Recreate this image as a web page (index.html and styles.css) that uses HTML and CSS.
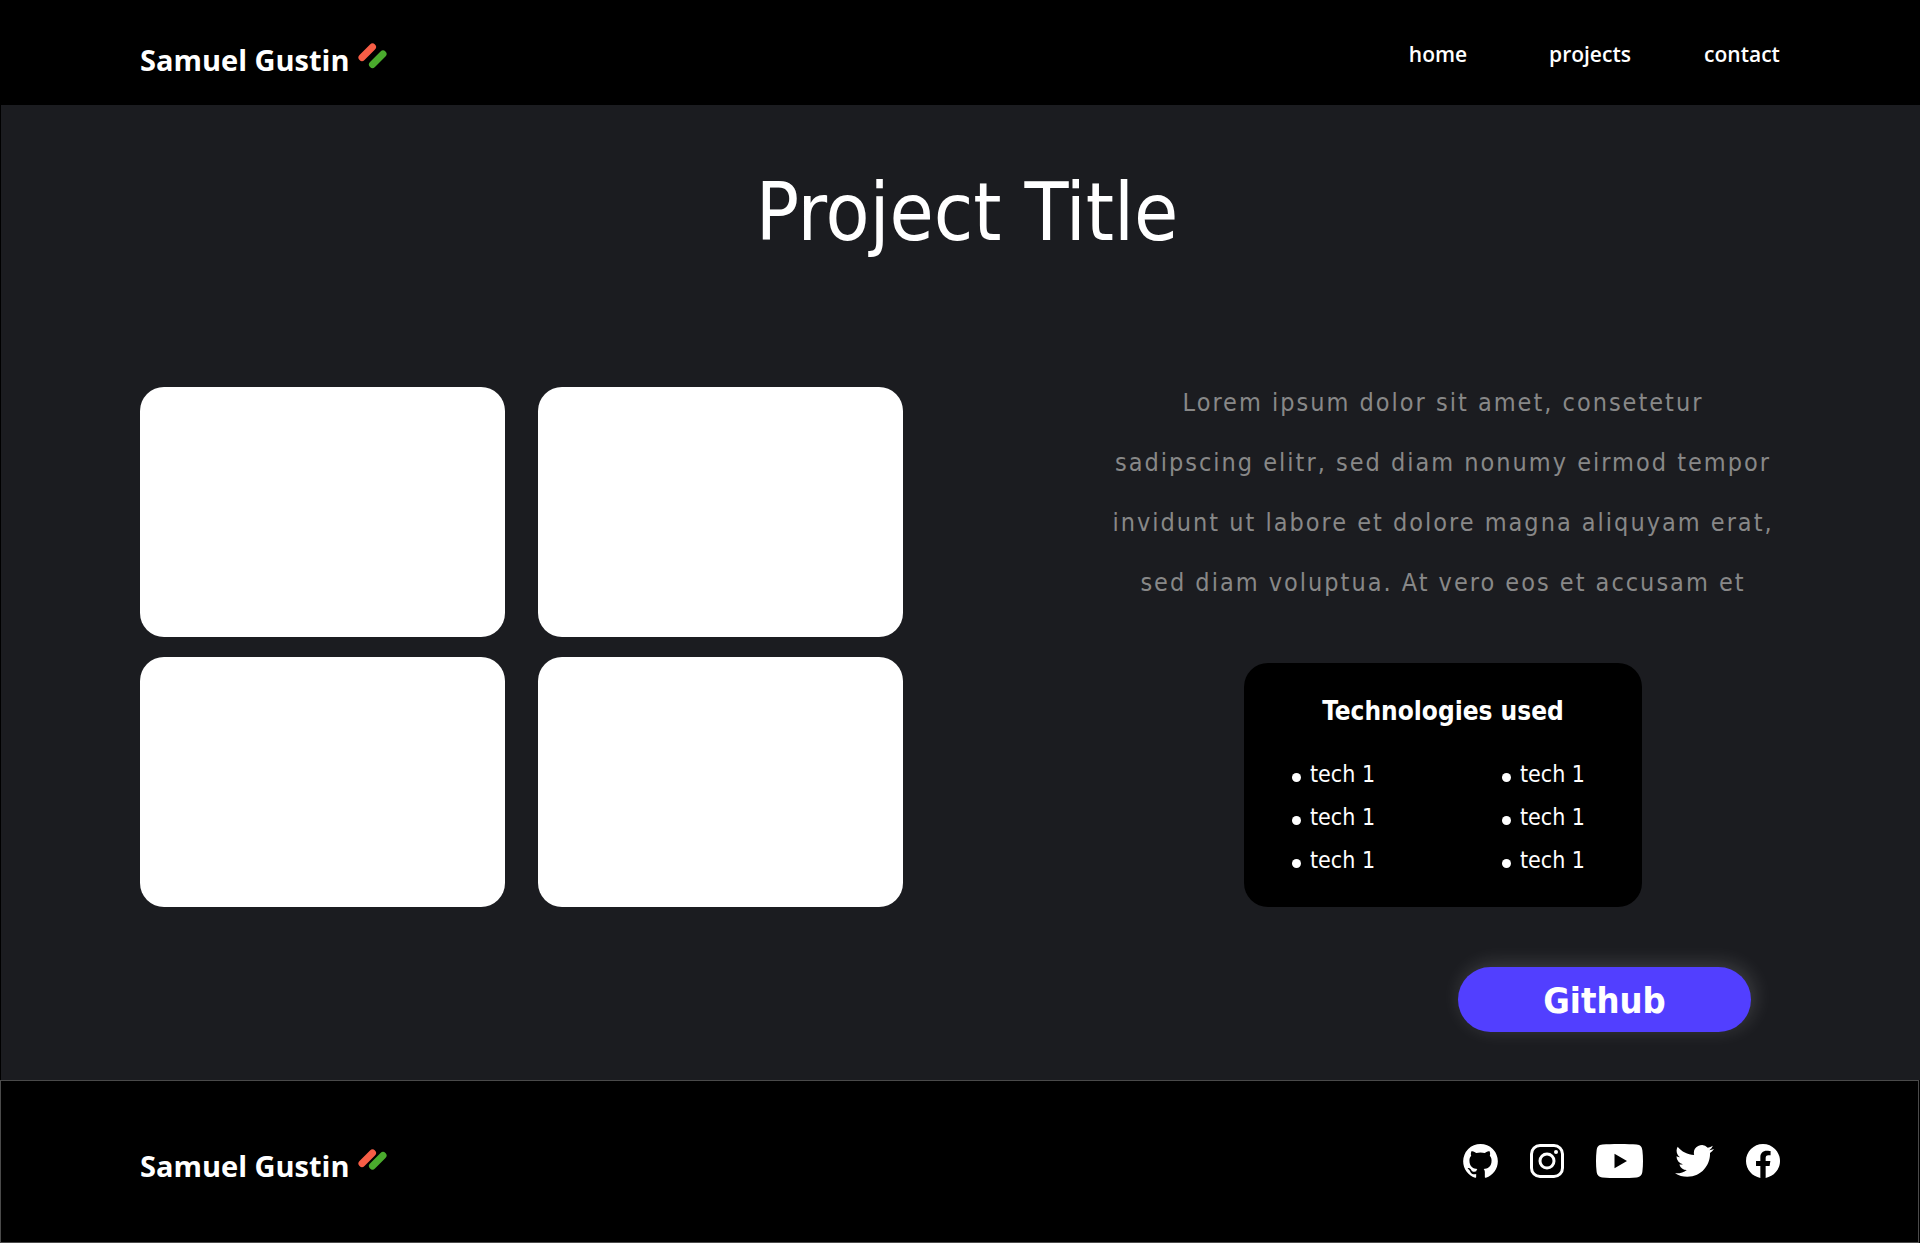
FILE: index.html
```html
<!DOCTYPE html>
<html lang="en">
<head>
<meta charset="utf-8">
<meta name="viewport" content="width=device-width, initial-scale=1">
<title>Samuel Gustin - Project</title>
<link rel="stylesheet" href="styles.css">
</head>
<body>
<header class="site-header">
  <a class="logo" href="#">Samuel Gustin
    <svg class="logo-mark" viewBox="0 0 29 26" width="29" height="26" aria-hidden="true"><path d="M4 14.5 14.5 4" stroke="#f75e46"/><path d="M14.5 21.5 25 11" stroke="#4aab2d"/></svg>
  </a>
  <nav class="site-nav">
    <a href="#">home</a>
    <a href="#">projects</a>
    <a href="#">contact</a>
  </nav>
</header>

<main class="project">
  <h1 class="project-title">Project Title</h1>
  <div class="project-body">
    <div class="gallery">
      <div class="shot"></div>
      <div class="shot"></div>
      <div class="shot"></div>
      <div class="shot"></div>
    </div>
    <div class="details">
      <p class="description">Lorem ipsum dolor sit amet, consetetur<br>sadipscing elitr, sed diam nonumy eirmod tempor<br>invidunt ut labore et dolore magna aliquyam erat,<br>sed diam voluptua. At vero eos et accusam et</p>
      <section class="tech">
        <h2 class="tech-title">Technologies used</h2>
        <div class="tech-lists">
          <ul class="tech-list"><li>tech 1</li><li>tech 1</li><li>tech 1</li></ul>
          <ul class="tech-list"><li>tech 1</li><li>tech 1</li><li>tech 1</li></ul>
        </div>
      </section>
      <button class="github-button" type="button">Github</button>
    </div>
  </div>
</main>

<footer class="site-footer">
  <a class="logo" href="#">Samuel Gustin
    <svg class="logo-mark" viewBox="0 0 29 26" width="29" height="26" aria-hidden="true"><path d="M4 14.5 14.5 4" stroke="#f75e46"/><path d="M14.5 17 25 6.500" stroke="#4aab2d"/></svg>
  </a>
  <div class="social">
    <a href="#" aria-label="GitHub"><svg viewBox="2 2 20 19.600" width="35" height="34"><path d="M12,2A10,10 0 0,0 2,12C2,16.42 4.87,20.17 8.84,21.5C9.34,21.58 9.5,21.27 9.5,21C9.5,20.77 9.5,20.14 9.5,19.31C6.73,19.91 6.14,17.97 6.14,17.97C5.68,16.81 5.03,16.5 5.03,16.5C4.12,15.88 5.1,15.9 5.1,15.9C6.1,15.97 6.63,16.93 6.63,16.93C7.5,18.45 8.97,18 9.54,17.76C9.63,17.11 9.89,16.67 10.17,16.42C7.95,16.17 5.62,15.31 5.62,11.5C5.62,10.39 6,9.5 6.65,8.79C6.55,8.54 6.2,7.5 6.75,6.15C6.75,6.15 7.59,5.88 9.5,7.17C10.29,6.95 11.15,6.84 12,6.84C12.85,6.84 13.71,6.95 14.5,7.17C16.41,5.88 17.25,6.15 17.25,6.15C17.8,7.5 17.45,8.54 17.35,8.79C18,9.5 18.38,10.39 18.38,11.5C18.38,15.32 16.04,16.16 13.81,16.41C14.17,16.72 14.5,17.33 14.5,18.26C14.5,19.6 14.5,20.68 14.5,21C14.5,21.27 14.66,21.59 15.17,21.5C19.14,20.16 22,16.42 22,12A10,10 0 0,0 12,2Z"/></svg></a>
    <a href="#" aria-label="Instagram"><svg viewBox="0 0 34 34" width="34" height="34"><rect x="1.500" y="1.500" width="31" height="31" rx="8.500" fill="none" stroke="#fff" stroke-width="3"/><circle cx="17" cy="17" r="7" fill="none" stroke="#fff" stroke-width="3"/><circle cx="26" cy="8" r="2"/></svg></a>
    <a href="#" aria-label="YouTube"><svg viewBox="0 0 47 34" width="47" height="34"><path fill-rule="evenodd" d="M23.500 0C31 0 36 .2 40.500.6C44.500 1 46 3 46.400 6.500C47.200 13 47.200 21 46.400 27.500C46 31 44.500 33 40.500 33.400C36 33.800 31 34 23.500 34S11 33.800 6.500 33.400C2.500 33 1 31 .6 27.500C-.2 21-.2 13 .6 6.500C1 3 2.500 1 6.500.6C11 .2 16 0 23.500 0ZM18.500 9.800V24.200L31 17Z"/></svg></a>
    <a href="#" aria-label="Twitter"><svg viewBox="0 1.700 24 20.600" width="39" height="34"><path d="M23.953 4.570a10 10 0 01-2.825.775 4.958 4.958 0 002.163-2.723c-.951.555-2.005.959-3.127 1.184a4.920 4.920 0 00-8.384 4.482C7.690 8.095 4.067 6.130 1.640 3.162a4.822 4.822 0 00-.666 2.475c0 1.710.870 3.213 2.188 4.096a4.904 4.904 0 01-2.228-.616v.060a4.923 4.923 0 003.946 4.827 4.996 4.996 0 01-2.212.085 4.936 4.936 0 004.604 3.417 9.867 9.867 0 01-6.102 2.105c-.390 0-.779-.023-1.170-.067a13.995 13.995 0 007.557 2.209c9.053 0 13.998-7.496 13.998-13.985 0-.210 0-.420-.015-.630A9.935 9.935 0 0024 4.590z"/></svg></a>
    <a href="#" aria-label="Facebook"><svg viewBox="0 0 24 24" width="34" height="34"><path d="M24 12.073c0-6.627-5.373-12-12-12s-12 5.373-12 12c0 5.990 4.388 10.954 10.125 11.854v-8.385H7.078v-3.470h3.047V9.430c0-3.007 1.792-4.669 4.533-4.669 1.312 0 2.686.235 2.686.235v2.953H15.830c-1.491 0-1.956.925-1.956 1.874v2.250h3.328l-.532 3.470h-2.796v8.385C19.612 23.027 24 18.062 24 12.073z"/></svg></a>
  </div>
</footer>
</body>
</html>
```
FILE: styles.css
```css
* {
  box-sizing: border-box;
}

body {
  margin: 0;
  background: #000;
  color: #fff;
  font-family: "DejaVu Sans Condensed", "Noto Sans", sans-serif;
}

h1, h2, p, ul {
  margin: 0;
  padding: 0;
}

a {
  color: inherit;
  text-decoration: none;
}

.site-header {
  display: flex;
  justify-content: space-between;
  align-items: flex-start;
  padding: 38px 140px 24px;
}

.logo {
  display: flex;
  align-items: flex-start;
  gap: 8px;
  font: bold 29px/43px "Open Sans", sans-serif;
}

.logo-mark {
  margin-top: 5px;
  fill: none;
  stroke-width: 7;
  stroke-linecap: round;
}

.site-nav {
  display: flex;
  gap: 76px;
  font: 600 21px/32px "Open Sans", sans-serif;
}

.site-nav a {
  width: 76px;
  display: flex;
  justify-content: center;
}

.project {
  padding: 58px 140px 48px 139px;
  border-left: 1px solid #000;
  background: #1b1c20;
}

.project-title {
  padding-left: 14px;
  font-size: 80px;
  font-weight: normal;
  line-height: 100px;
  text-align: center;
}

.project-body {
  display: grid;
  grid-template-columns: minmax(0, 763fr) minmax(0, 674fr);
  column-gap: 203px;
  margin-top: 110px;
}

.gallery {
  display: grid;
  grid-template-columns: 1fr 1fr;
  grid-auto-rows: 250px;
  align-content: start;
  gap: 20px 33px;
  padding-top: 14px;
}

.shot {
  border-radius: 24px;
  background: #fff;
}

.details {
  display: flex;
  flex-direction: column;
  align-items: center;
}

.description {
  color: #888;
  font-size: 25px;
  line-height: 60px;
  letter-spacing: 2px;
  text-align: center;
  white-space: nowrap;
}

.tech {
  width: 398px;
  margin-top: 50px;
  padding: 30px 48px 25px;
  border-radius: 24px;
  background: #000;
}

.tech-title {
  font-size: 26px;
  line-height: 36px;
  text-align: center;
}

.tech-lists {
  display: flex;
  justify-content: space-between;
  margin-top: 24px;
  padding-right: 9px;
}

.tech-list {
  list-style: none;
  font-size: 23px;
  line-height: 43px;
}

.tech-list li {
  display: flex;
  align-items: baseline;
  gap: 9px;
}

.tech-list li::before {
  content: "";
  width: 9px;
  height: 9px;
  border-radius: 50%;
  background: #fff;
}

.github-button {
  align-self: flex-end;
  width: 293px;
  height: 65px;
  margin: 60px 29px 0 0;
  padding: 2px 0 0;
  border: 0;
  border-radius: 33px;
  background: #523fff;
  box-shadow: 3px -3px 20px rgba(255, 255, 255, 0.16);
  color: #fff;
  font: bold 36px "DejaVu Sans Condensed", "Noto Sans", sans-serif;
}

.site-footer {
  display: flex;
  justify-content: space-between;
  align-items: flex-start;
  margin-right: 1px;
  padding: 63px 138px 55px 139px;
  border: 1px solid #4a4a4a;
}

.social {
  display: flex;
  gap: 32px;
}

.social svg {
  display: block;
  fill: #fff;
}
```
